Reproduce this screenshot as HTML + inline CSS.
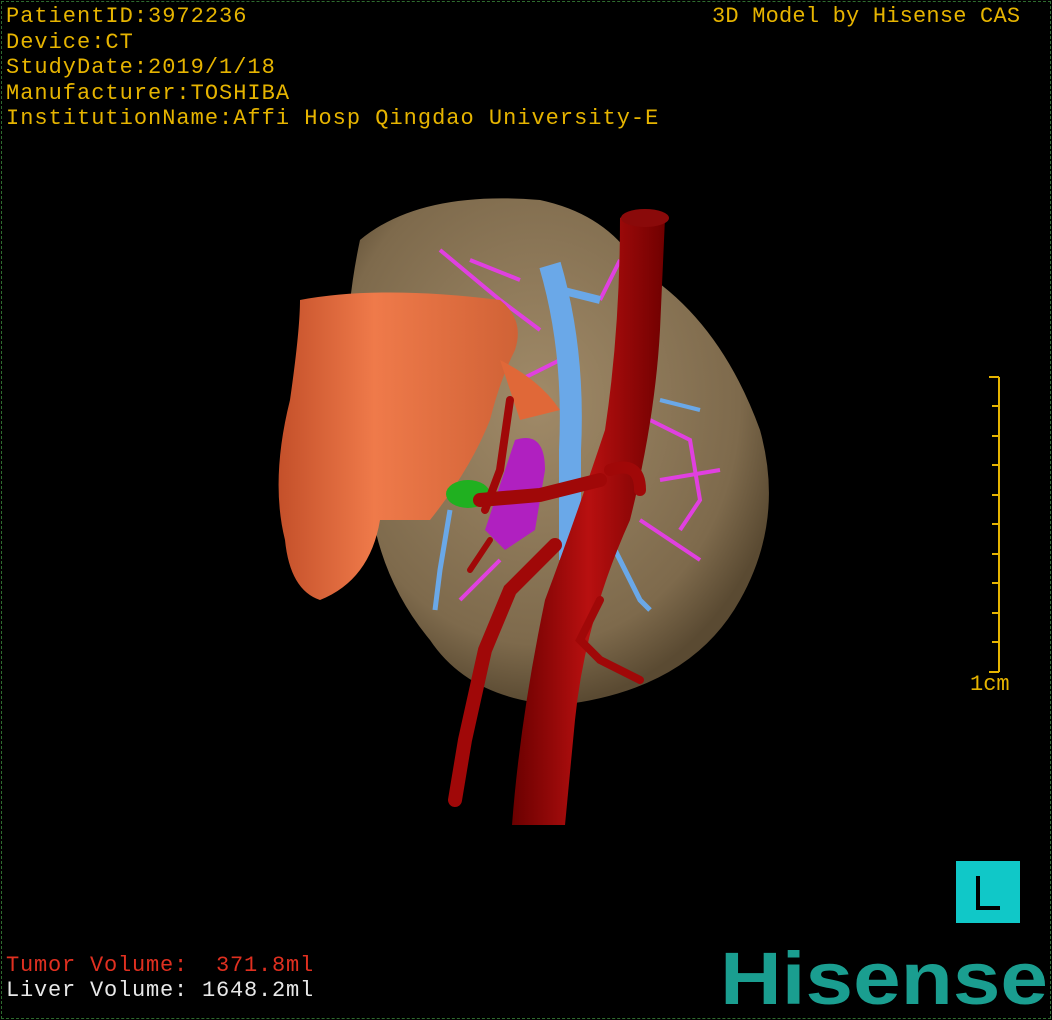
<!DOCTYPE html>
<html><head><meta charset="utf-8"><style>
body{margin:0;background:#000;width:1052px;height:1020px;overflow:hidden;position:relative;font-family:"Liberation Mono","WenQuanYi Zen Hei",monospace}
.frame{position:absolute;left:1px;top:1px;width:1048px;height:1016px;border:1px dashed #2e6b2e}
.t{position:absolute;color:#e6b400;font-size:22px;line-height:25.5px;white-space:pre;letter-spacing:1px}
</style></head><body>
<svg width="1052" height="1020" style="position:absolute;left:0;top:0">
<defs>
<radialGradient id="lv" cx="0.45" cy="0.4" r="0.6"><stop offset="0" stop-color="#a08a68"/><stop offset="0.8" stop-color="#7e6a4c"/><stop offset="1" stop-color="#5a4a32"/></radialGradient>
<linearGradient id="tm" x1="0" x2="1"><stop offset="0" stop-color="#c4502a"/><stop offset="0.4" stop-color="#ef7a4a"/><stop offset="1" stop-color="#d06236"/></linearGradient>
<linearGradient id="ao" x1="0" x2="1"><stop offset="0" stop-color="#6a0000"/><stop offset="0.5" stop-color="#b81010"/><stop offset="1" stop-color="#700000"/></linearGradient>
</defs>
<path d="M360 240 Q420 190 540 200 Q610 215 640 270 Q720 320 760 430 Q785 520 740 600 Q690 690 560 705 Q470 700 430 640 Q380 580 370 500 Q330 380 360 240Z" fill="url(#lv)"/>
<g stroke="#e040e0" stroke-width="4" fill="none">
<path d="M440 250 L500 300 L540 330"/><path d="M470 260 L520 280"/><path d="M600 300 L620 260"/><path d="M650 420 L690 440 L700 500 L680 530"/><path d="M660 480 L720 470"/><path d="M640 520 L700 560"/><path d="M520 380 L560 360"/><path d="M500 560 L460 600"/>
</g>
<g stroke="#6aa8e8" fill="none">
<path d="M550 265 Q575 350 570 450 L570 560" stroke-width="22"/>
<path d="M560 290 L600 300" stroke-width="8"/>
<path d="M600 520 L640 600 L650 610" stroke-width="5"/>
<path d="M450 510 L440 570 L435 610" stroke-width="5"/>
<path d="M660 400 L700 410" stroke-width="4"/>
</g>
<path d="M300 300 Q380 285 500 300 Q525 320 515 350 Q500 380 490 420 Q470 470 430 520 L380 520 Q370 580 320 600 Q290 590 285 540 Q270 480 290 400 Q300 330 300 300Z" fill="url(#tm)"/>
<path d="M500 360 Q540 380 560 410 L520 420Z" fill="#e06838"/>
<ellipse cx="468" cy="494" rx="22" ry="14" fill="#20b020"/>
<path d="M515 440 Q545 430 545 470 L535 530 L505 550 L485 530Z" fill="#b020c0"/>
<path d="M620 218 Q630 210 665 218 L660 330 Q655 420 630 520 Q585 620 575 720 L565 825 L512 825 Q520 720 545 600 Q575 520 605 430 Q620 330 620 218Z" fill="url(#ao)"/>
<ellipse cx="645" cy="218" rx="24" ry="9" fill="#8a0a0a"/>
<g stroke="#a00808" fill="none" stroke-linecap="round">
<path d="M600 480 L540 495 L480 500" stroke-width="14"/>
<path d="M510 400 L500 470 L485 510" stroke-width="8"/>
<path d="M555 545 L510 590 L485 650 L465 740 L455 800" stroke-width="14"/>
<path d="M490 540 L470 570" stroke-width="6"/>
<path d="M600 600 L580 640 L600 660 L640 680" stroke-width="8"/>
<path d="M610 470 Q640 460 640 490" stroke-width="12"/>
</g>
<g stroke="#e6b400" stroke-width="2">
<line x1="999" y1="377" x2="999" y2="672"/>
<line x1="989" y1="377" x2="999" y2="377"/><line x1="989" y1="672" x2="999" y2="672"/>
<line x1="992" y1="406" x2="999" y2="406"/><line x1="992" y1="436" x2="999" y2="436"/><line x1="992" y1="465" x2="999" y2="465"/><line x1="992" y1="495" x2="999" y2="495"/><line x1="992" y1="524" x2="999" y2="524"/><line x1="992" y1="554" x2="999" y2="554"/><line x1="992" y1="583" x2="999" y2="583"/><line x1="992" y1="613" x2="999" y2="613"/><line x1="992" y1="642" x2="999" y2="642"/>
</g>
<rect x="956" y="861" width="64" height="62" fill="#10c8c8"/>
<path d="M978 876 V908 H1000" stroke="#000" stroke-width="4" fill="none"/>
<text x="720" y="1004" font-family="Liberation Sans,sans-serif" font-weight="bold" font-size="74" fill="#1a9e90" textLength="328" lengthAdjust="spacingAndGlyphs">Hisense</text>
</svg>
<div class="frame"></div>
<div class="t" style="left:6px;top:4px">PatientID:3972236
Device:CT
StudyDate:2019/1/18
Manufacturer:TOSHIBA
InstitutionName:Affi Hosp Qingdao University-E</div>
<div class="t" style="left:712px;top:4px;letter-spacing:0.2px">3D Model by Hisense CAS</div>
<div class="t" style="left:970px;top:672px;letter-spacing:0">1cm</div>
<div class="t" style="left:6px;top:953px;color:#e03020;letter-spacing:0.8px">Tumor Volume:  371.8ml</div>
<div class="t" style="left:6px;top:978px;color:#e8e8e8;letter-spacing:0.8px">Liver Volume: 1648.2ml</div>
</body></html>
